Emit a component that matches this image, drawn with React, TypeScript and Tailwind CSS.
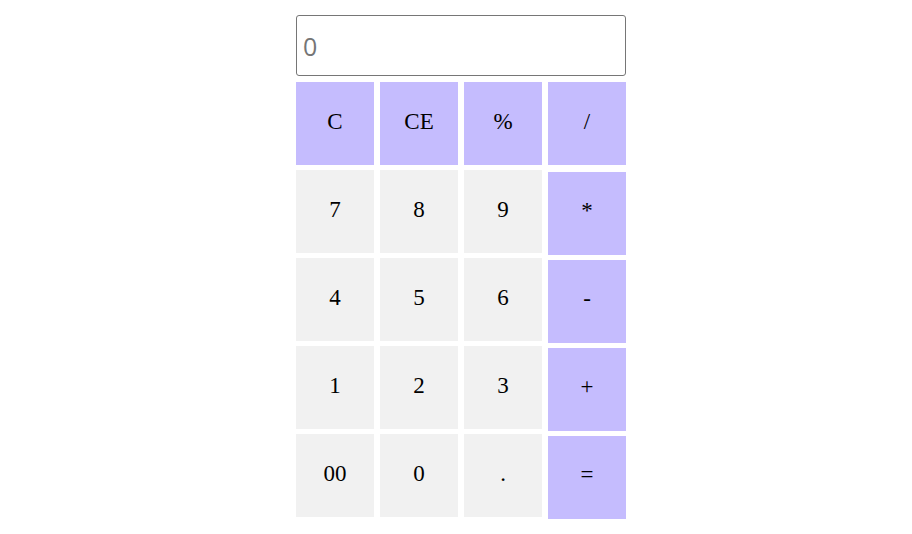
import React from "react";

const rows: { label: string; op: boolean }[][] = [
  [
    { label: "C", op: true },
    { label: "CE", op: true },
    { label: "%", op: true },
    { label: "/", op: true },
  ],
  [
    { label: "7", op: false },
    { label: "8", op: false },
    { label: "9", op: false },
    { label: "*", op: true },
  ],
  [
    { label: "4", op: false },
    { label: "5", op: false },
    { label: "6", op: false },
    { label: "-", op: true },
  ],
  [
    { label: "1", op: false },
    { label: "2", op: false },
    { label: "3", op: false },
    { label: "+", op: true },
  ],
  [
    { label: "00", op: false },
    { label: "0", op: false },
    { label: ".", op: false },
    { label: "=", op: true },
  ],
];

export default function App() {
  return (
    <div className="min-h-[534px] w-full bg-white">
      <div className="ml-[296px] w-[330px] pt-[15px]">
        <input
          readOnly
          placeholder="0"
          className="block h-[61px] w-[330px] rounded-[3px] border border-[#767676] bg-white px-[6px] text-[25px] text-black placeholder:text-[#757575] outline-none"
          style={{ fontFamily: '"Open Sans", "Noto Sans", sans-serif' }}
        />
        <div className="mt-[6px] grid grid-cols-[78px_78px_78px_78px] auto-rows-[83px] gap-x-[6px] gap-y-[5px]">
          {rows.map((row, ri) =>
            row.map((b, ci) => (
              <button
                key={`${ri}-${ci}`}
                className={`flex h-[83px] w-[78px] items-center justify-center pb-[3px] text-[23px] text-black ${
                  b.op ? "bg-[#c5bcfe]" : "bg-[#f1f1f1]"
                } ${b.op && ci === 3 && ri > 0 ? "mt-[1.5px]" : ""}`}
                style={{ fontFamily: '"Liberation Serif", "Times New Roman", serif' }}
              >
                {b.label}
              </button>
            ))
          )}
        </div>
      </div>
    </div>
  );
}
